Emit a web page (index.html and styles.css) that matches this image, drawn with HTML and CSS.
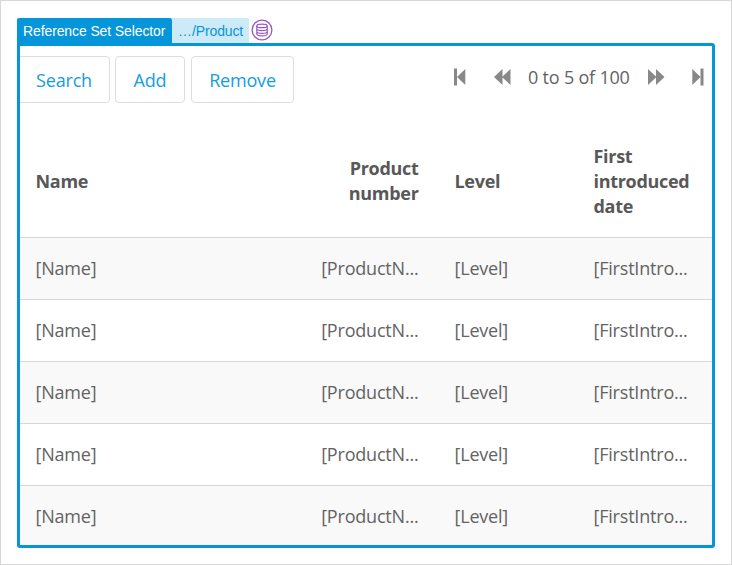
FILE: index.html
```html
<!DOCTYPE html>
<html lang="en">
<head>
<meta charset="utf-8">
<title>Reference Set Selector</title>
<link rel="stylesheet" href="styles.css">
</head>
<body>
<div class="tabs">
  <span class="tab tab-main">Reference Set Selector</span>
  <span class="tab tab-entity">…/Product</span>
  <svg class="db" width="22" height="22" viewBox="0 0 22 22" fill="none" stroke="#9a54cb">
    <circle cx="11" cy="11" r="9.9" stroke-width="1.3"/>
    <ellipse cx="11" cy="6.9" rx="5.2" ry="1.8" stroke-width="1.2"/>
    <path d="M5.8 7v8c0 2.5 10.4 2.5 10.4 0V7M5.8 9.7c0 2.5 10.4 2.5 10.4 0M5.8 12.4c0 2.5 10.4 2.5 10.4 0" stroke-width="1.2"/>
  </svg>
</div>
<main class="grid">
  <div class="toolbar">
    <button class="btn btn-search">Search</button>
    <button class="btn btn-add">Add</button>
    <button class="btn btn-remove">Remove</button>
    <div class="pager">
      <svg class="first" width="12" height="18" viewBox="0 0 12 18" fill="#888"><path d="M0 .5h3v17H0zM11.3 1v16L3 9z"/></svg>
      <svg class="prev" width="17" height="18" viewBox="0 0 17 18" fill="#888"><path d="M8.5 1v16L0 9zM16.5 1v16L8 9z"/></svg>
      <span class="status">0 to 5 of 100</span>
      <svg class="next" width="17" height="18" viewBox="0 0 17 18" fill="#888"><path d="M0 1v16l8.5-8zM8 1v16l8.5-8z"/></svg>
      <svg class="last" width="12" height="18" viewBox="0 0 12 18" fill="#888"><path d="M8.5.5h3v17h-3zM.3 1v16l8.2-8z"/></svg>
    </div>
  </div>
  <div class="row head"><div>Name</div><div class="num">Product<br>number</div><div>Level</div><div>First introduced date</div></div>
  <div class="row odd"><div>[Name]</div><div class="num">[ProductN...</div><div>[Level]</div><div>[FirstIntro...</div></div>
  <div class="row"><div>[Name]</div><div class="num">[ProductN...</div><div>[Level]</div><div>[FirstIntro...</div></div>
  <div class="row odd"><div>[Name]</div><div class="num">[ProductN...</div><div>[Level]</div><div>[FirstIntro...</div></div>
  <div class="row"><div>[Name]</div><div class="num">[ProductN...</div><div>[Level]</div><div>[FirstIntro...</div></div>
  <div class="row odd"><div>[Name]</div><div class="num">[ProductN...</div><div>[Level]</div><div>[FirstIntro...</div></div>
</main>
</body>
</html>
```
FILE: styles.css
```css
* { box-sizing: border-box; }
body {
  margin: 0;
  height: 565px;
  padding: 17px 16px 0;
  border: 1px solid #d7d7d7;
  background: #fff;
  overflow: hidden;
  color: #636363;
  font: 18px/25px "Open Sans", sans-serif;
  letter-spacing: -0.2px;
}
.tabs {
  display: flex;
  height: 25px;
  font: 14px/26px "Liberation Sans", sans-serif;
  letter-spacing: -0.11px;
}
.tab { white-space: nowrap; }
.tab-main {
  width: 155px;
  padding-left: 6px;
  background: #0595db;
  color: #fff;
  border-radius: 2px 2px 0 0;
}
.tab-entity {
  width: 77px;
  padding-left: 6px;
  background: #cdeaf8;
  color: #0595db;
  border-radius: 0 2px 0 0;
}
.db { margin: 1px 0 0 2px; }
.grid {
  width: 698px;
  height: 505px;
  border: 3px solid #0595db;
  border-radius: 0 3px 3px 3px;
  overflow: hidden;
}
.toolbar {
  display: flex;
  height: 79px;
  padding-top: 10px;
}
.btn {
  height: 47px;
  padding: 2px 0 0;
  border: 1px solid #ddd;
  border-radius: 4px;
  background: #fff;
  color: #149ddf;
  font: inherit;
  letter-spacing: inherit;
}
.btn-search { width: 93px; margin-left: -3px; padding-left: 1px; }
.btn-add { width: 70px; margin-left: 5px; }
.btn-remove { width: 103px; margin-left: 6px; }
.pager {
  display: flex;
  align-items: center;
  height: 42px;
  margin-left: 160px;
}
.pager svg { flex: none; }
.prev { margin-left: 28px; }
.status { width: 102px; margin-left: 17px; white-space: nowrap; }
.next { margin-left: 18px; }
.last { margin-left: 27px; }
.row {
  display: grid;
  grid-template-columns: 282px 134px 139px 137px;
  align-items: center;
  height: 62px;
  border-top: 1px solid #d7d7d7;
  white-space: nowrap;
}
.row > div { padding-left: 18.5px; }
.row > div:first-child { padding-left: 15.5px; }
.row > .num { padding: 0 17.5px 0 0; text-align: right; }
.odd { background: #f9f9f9; }
.head {
  height: 112px;
  border-top: 0;
  color: #585858;
  font-weight: 700;
  letter-spacing: -0.3px;
  white-space: normal;
}
```
